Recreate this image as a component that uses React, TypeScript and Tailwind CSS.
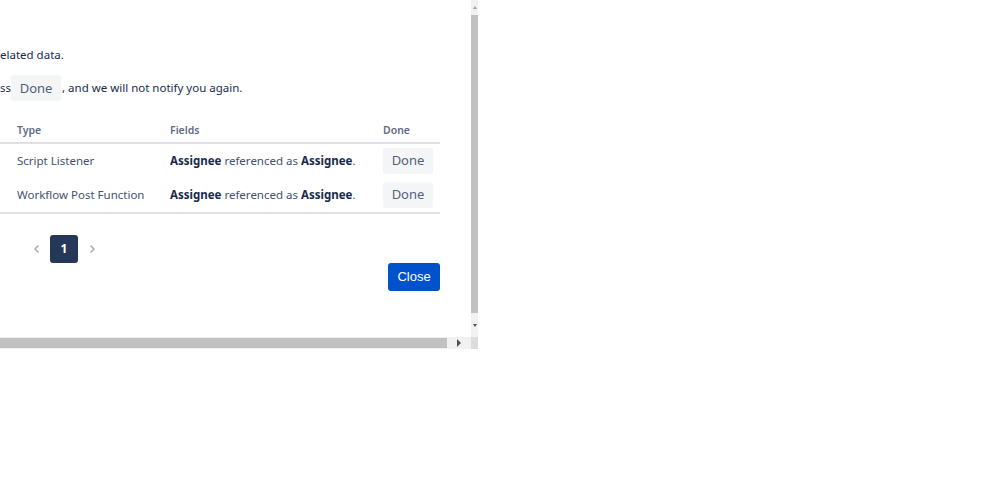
import React from "react";

const rows = [
  { type: "Script Listener" },
  { type: "Workflow Post Function" },
];

function DoneChip({ className = "" }: { className?: string }) {
  return (
    <span
      className={
        "inline-flex h-[26px] w-[50px] items-center justify-center rounded-[3px] bg-[#f4f5f7] text-[13px] text-[#505f79] " +
        className
      }
    >
      Done
    </span>
  );
}

export default function App() {
  return (
    <div className="h-[498px] w-[999px] bg-white" style={{ fontFamily: '"Noto Sans", "Open Sans", sans-serif' }}>
      <div className="flex h-[349px] w-[478px] flex-col">
        <div className="flex min-h-0 flex-1">
          {/* scrolled dialog content */}
          <div className="w-[471px] overflow-hidden">
            <div className="w-[440px] pt-[46px] text-[11.5px] text-[#172b4d]">
              <p className="leading-[18px]">elated data.</p>
              <p className="mt-[11px] flex items-center leading-[18px]">
                <span>ss</span>
                <DoneChip className="ml-[0px] mr-[1px]" />
                <span>, and we will not notify you again.</span>
              </p>

              <table className="mt-[12px] w-[440px] border-collapse text-left">
                <thead>
                  <tr className="border-b-2 border-[#dfe1e6] text-[10.5px] text-[#5e6c84]">
                    <th className="h-[30px] w-[170px] pb-[3px] pl-[17px] align-bottom font-semibold">Type</th>
                    <th className="w-[213px] pb-[3px] align-bottom font-semibold">Fields</th>
                    <th className="pb-[3px] align-bottom font-semibold">Done</th>
                  </tr>
                </thead>
                <tbody className="border-b-2 border-[#dfe1e6]">
                  {rows.map((r) => (
                    <tr key={r.type} className="h-[35px] text-[11.5px]">
                      <td className="pl-[17px] text-[#42526e]">{r.type}</td>
                      <td className="text-[#42526e]">
                        <b className="font-bold text-[#172b4d]">Assignee</b> referenced as{" "}
                        <b className="font-bold text-[#172b4d]">Assignee</b>.
                      </td>
                      <td>
                        <DoneChip />
                      </td>
                    </tr>
                  ))}
                </tbody>
              </table>

              <div className="mt-[21px] flex items-center pl-[31px]">
                <svg width="12" height="12" viewBox="0 0 12 12" className="text-[#a5adba]">
                  <path d="M7.5 2.5 4 6l3.5 3.5" fill="none" stroke="currentColor" strokeWidth="1.5" />
                </svg>
                <span className="ml-[7px] flex h-[28px] w-[28px] items-center justify-center rounded-[3px] bg-[#253858] text-[12px] font-bold text-white">
                  1
                </span>
                <svg width="12" height="12" viewBox="0 0 12 12" className="ml-[8px] text-[#a5adba]">
                  <path d="M4.5 2.5 8 6l-3.5 3.5" fill="none" stroke="currentColor" strokeWidth="1.5" />
                </svg>
              </div>

              <div className="flex justify-end">
                <button
                  type="button"
                  className="h-[28px] w-[52px] rounded-[3px] bg-[#0052cc] text-[13px] text-white"
                  style={{ fontFamily: '"Liberation Sans", Arial, sans-serif' }}
                >
                  Close
                </button>
              </div>
            </div>
          </div>
          {/* vertical scrollbar */}
          <div className="flex w-[7px] flex-col bg-[#f1f1f1]">
            <div className="flex h-[15px] items-center justify-center">
              <span className="h-0 w-0 border-x-[2px] border-b-[3px] border-x-transparent border-b-[#a3a3a3]" />
            </div>
            <div className="h-[298px] bg-[#c1c1c1]" />
            <div className="flex flex-1 items-center justify-center">
              <span className="h-0 w-0 border-x-[2px] border-t-[3px] border-x-transparent border-t-[#505050]" />
            </div>
          </div>
        </div>
        {/* horizontal scrollbar */}
        <div className="flex h-[12px] bg-[#f1f1f1]">
          <div className="my-[1px] w-[447px] bg-[#c1c1c1]" />
          <div className="flex w-[24px] items-center justify-center">
            <span className="h-0 w-0 border-y-[4px] border-l-[4px] border-y-transparent border-l-[#505050]" />
          </div>
          <div className="w-[7px] bg-[#dcdcdc]" />
        </div>
      </div>
    </div>
  );
}
